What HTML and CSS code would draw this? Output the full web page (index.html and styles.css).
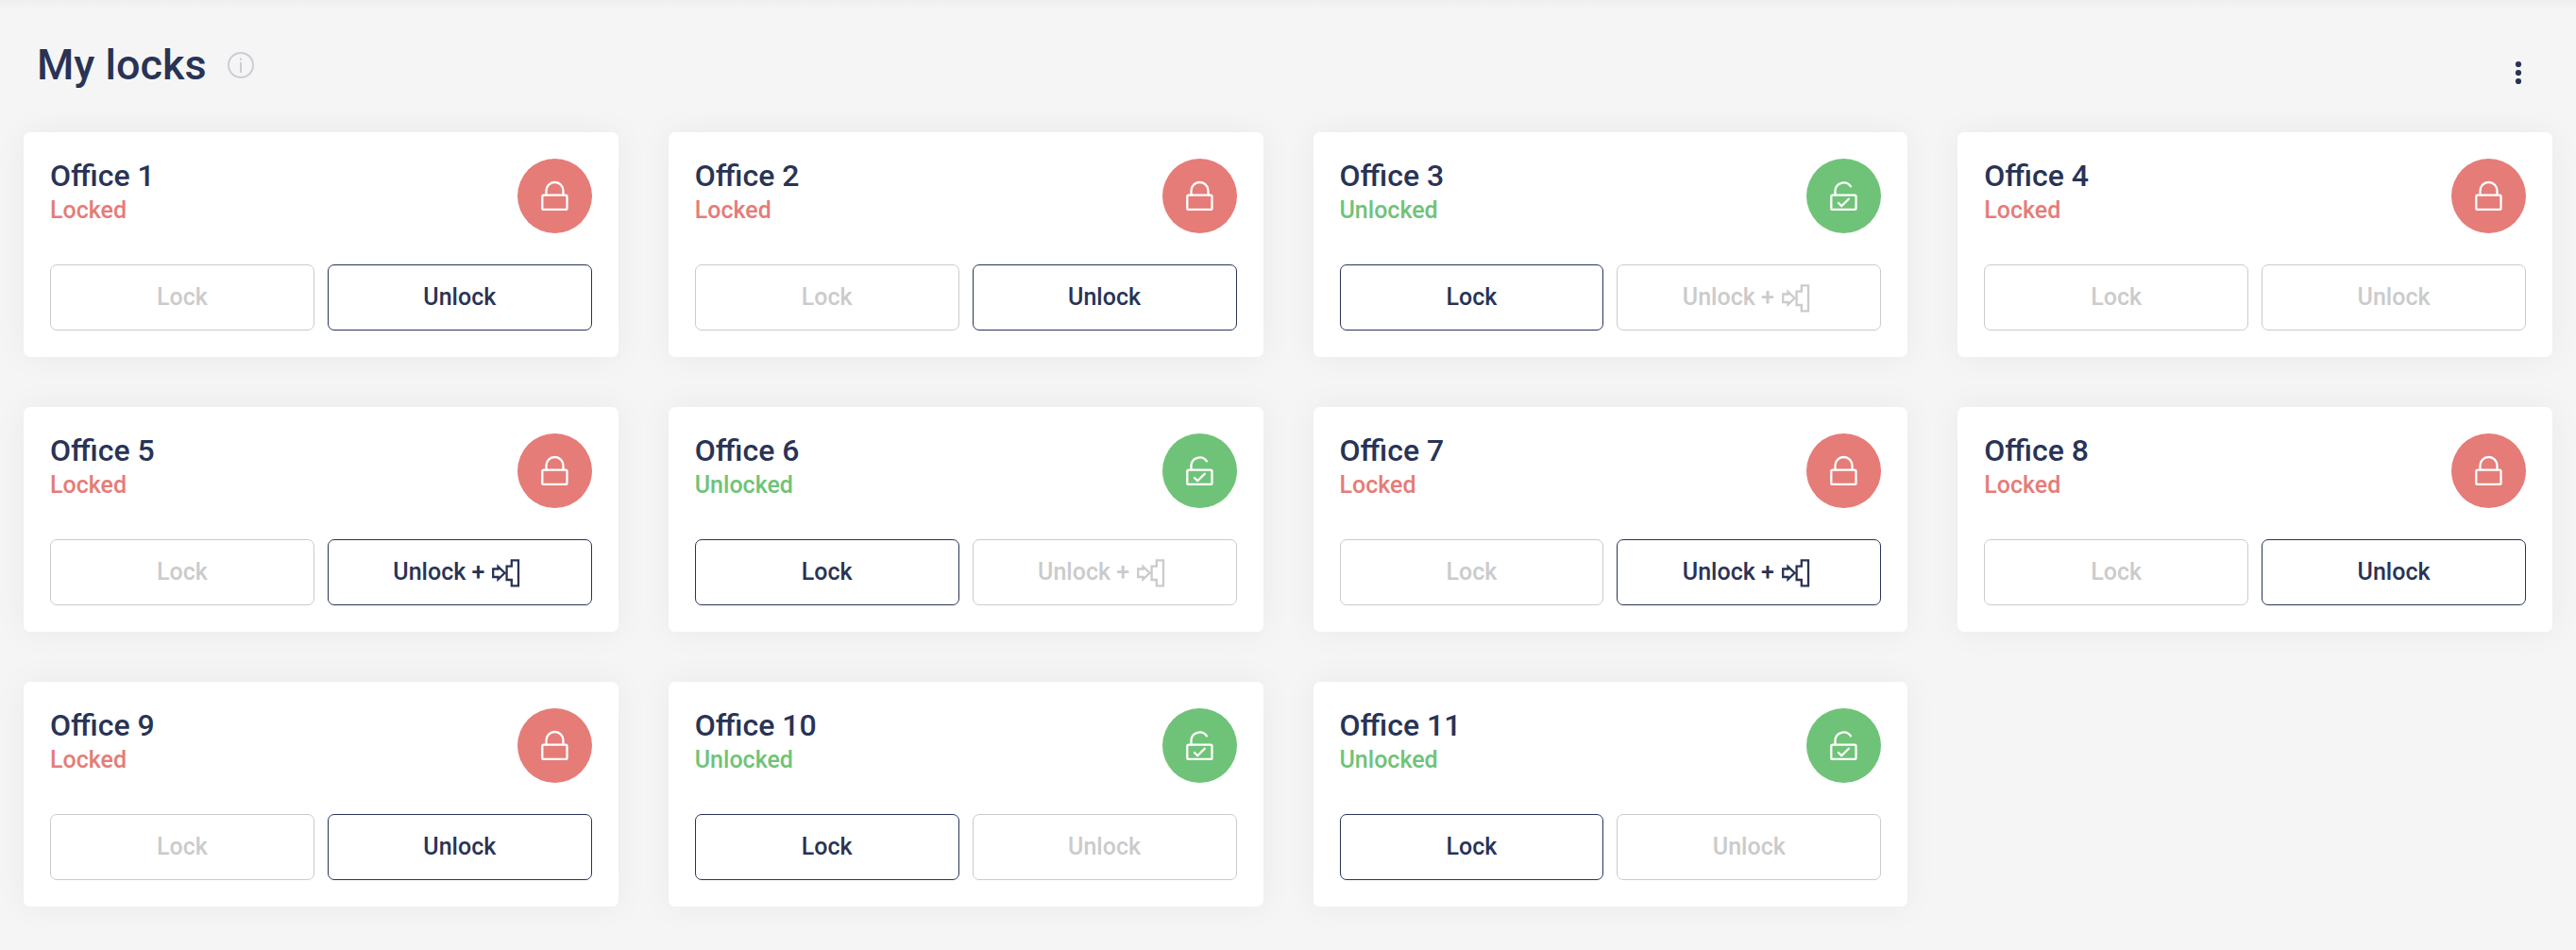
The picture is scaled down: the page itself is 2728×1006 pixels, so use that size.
FILE: index.html
```html
<!DOCTYPE html>
<html lang="en">
<head>
<meta charset="utf-8">
<meta name="viewport" content="width=device-width, initial-scale=1">
<title>My locks</title>
<link rel="stylesheet" href="styles.css">
</head>
<body>
<svg class="sprite" aria-hidden="true">
  <symbol id="locked" viewBox="0 0 33 33">
    <rect x="3.3" y="15.7" width="26.2" height="15.2" rx="1.5"/>
    <path d="M7.5 15.5V11a9 9 0 0 1 18 0v4.5"/>
  </symbol>
  <symbol id="unlocked" viewBox="0 0 33 33">
    <rect x="3.3" y="15.7" width="26.2" height="15.2" rx="1.5"/>
    <path d="M7.5 15.5V11a9 9 0 0 1 16.4-4.6M11 24l3.2 3.2 7.6-7.4"/>
  </symbol>
  <symbol id="door" viewBox="0 0 30 30">
    <path d="M1.2 10.5H6.5V8L13.5 14.8 6.5 21.5V19H1.2ZM20.8 1.3H28V28.3H20.8V22H15.6V7.7H20.8Z"/>
  </symbol>
</svg>
<header class="page-header">
  <h1 class="page-title">My locks</h1>
  <button class="icon-button info" type="button" aria-label="About locks">
    <svg class="info-icon" viewBox="0 0 28 28"><circle cx="14" cy="14" r="13"/><path d="M14 11v11M14 6.4v2.4"/></svg>
  </button>
  <button class="icon-button menu" type="button" aria-label="More options">
    <svg class="menu-icon" viewBox="0 0 8 26"><circle cx="4" cy="4" r="3.1"/><circle cx="4" cy="13" r="3.1"/><circle cx="4" cy="22" r="3.1"/></svg>
  </button>
</header>
<main class="locks">
  <article class="card locked">
    <div class="card-head"><div><h2 class="name">Office 1</h2><p class="status">Locked</p></div><span class="badge"><svg class="badge-icon"><use href="#locked"/></svg></span></div>
    <div class="actions"><button class="action" type="button" disabled>Lock</button><button class="action" type="button">Unlock</button></div>
  </article>
  <article class="card locked">
    <div class="card-head"><div><h2 class="name">Office 2</h2><p class="status">Locked</p></div><span class="badge"><svg class="badge-icon"><use href="#locked"/></svg></span></div>
    <div class="actions"><button class="action" type="button" disabled>Lock</button><button class="action" type="button">Unlock</button></div>
  </article>
  <article class="card unlocked">
    <div class="card-head"><div><h2 class="name">Office 3</h2><p class="status">Unlocked</p></div><span class="badge"><svg class="badge-icon"><use href="#unlocked"/></svg></span></div>
    <div class="actions"><button class="action" type="button">Lock</button><button class="action" type="button" disabled>Unlock +<svg class="door-icon"><use href="#door"/></svg></button></div>
  </article>
  <article class="card locked">
    <div class="card-head"><div><h2 class="name">Office 4</h2><p class="status">Locked</p></div><span class="badge"><svg class="badge-icon"><use href="#locked"/></svg></span></div>
    <div class="actions"><button class="action" type="button" disabled>Lock</button><button class="action" type="button" disabled>Unlock</button></div>
  </article>
  <article class="card locked">
    <div class="card-head"><div><h2 class="name">Office 5</h2><p class="status">Locked</p></div><span class="badge"><svg class="badge-icon"><use href="#locked"/></svg></span></div>
    <div class="actions"><button class="action" type="button" disabled>Lock</button><button class="action" type="button">Unlock +<svg class="door-icon"><use href="#door"/></svg></button></div>
  </article>
  <article class="card unlocked">
    <div class="card-head"><div><h2 class="name">Office 6</h2><p class="status">Unlocked</p></div><span class="badge"><svg class="badge-icon"><use href="#unlocked"/></svg></span></div>
    <div class="actions"><button class="action" type="button">Lock</button><button class="action" type="button" disabled>Unlock +<svg class="door-icon"><use href="#door"/></svg></button></div>
  </article>
  <article class="card locked">
    <div class="card-head"><div><h2 class="name">Office 7</h2><p class="status">Locked</p></div><span class="badge"><svg class="badge-icon"><use href="#locked"/></svg></span></div>
    <div class="actions"><button class="action" type="button" disabled>Lock</button><button class="action" type="button">Unlock +<svg class="door-icon"><use href="#door"/></svg></button></div>
  </article>
  <article class="card locked">
    <div class="card-head"><div><h2 class="name">Office 8</h2><p class="status">Locked</p></div><span class="badge"><svg class="badge-icon"><use href="#locked"/></svg></span></div>
    <div class="actions"><button class="action" type="button" disabled>Lock</button><button class="action" type="button">Unlock</button></div>
  </article>
  <article class="card locked">
    <div class="card-head"><div><h2 class="name">Office 9</h2><p class="status">Locked</p></div><span class="badge"><svg class="badge-icon"><use href="#locked"/></svg></span></div>
    <div class="actions"><button class="action" type="button" disabled>Lock</button><button class="action" type="button">Unlock</button></div>
  </article>
  <article class="card unlocked">
    <div class="card-head"><div><h2 class="name">Office 10</h2><p class="status">Unlocked</p></div><span class="badge"><svg class="badge-icon"><use href="#unlocked"/></svg></span></div>
    <div class="actions"><button class="action" type="button">Lock</button><button class="action" type="button" disabled>Unlock</button></div>
  </article>
  <article class="card unlocked">
    <div class="card-head"><div><h2 class="name">Office 11</h2><p class="status">Unlocked</p></div><span class="badge"><svg class="badge-icon"><use href="#unlocked"/></svg></span></div>
    <div class="actions"><button class="action" type="button">Lock</button><button class="action" type="button" disabled>Unlock</button></div>
  </article>
</main>
</body>
</html>
```
FILE: styles.css
```css
:root {
  --navy: #293356;
  --red: #e57c78;
  --green: #6fc378;
  --muted: #cbcbcb;
}

* {
  box-sizing: border-box;
}

body {
  margin: 0;
  min-height: 100vh;
  padding: 0 25px 44px;
  background: #f5f5f5 linear-gradient(#efefef, #f5f5f5) no-repeat top / 100% 10px;
  color: var(--navy);
  font-family: Roboto, "Liberation Sans", sans-serif;
  font-weight: 500;
}

.sprite {
  display: none;
}

.page-header {
  display: flex;
  align-items: center;
  padding: 39px 32px 41px 14px;
}

.page-title {
  margin: 0;
  font-size: 45px;
  font-weight: 500;
  line-height: 60px;
}

.icon-button {
  display: flex;
  padding: 0;
  border: 0;
  background: none;
  color: inherit;
  cursor: pointer;
}

.info {
  margin-left: 22px;
}

.info-icon {
  width: 28px;
  height: 28px;
  fill: none;
  stroke: #cccdd5;
  stroke-width: 2;
}

.menu {
  margin-left: auto;
  padding-top: 16px;
}

.menu-icon {
  width: 8px;
  height: 26px;
  fill: currentColor;
}

.locks {
  display: grid;
  grid-template-columns: repeat(auto-fill, minmax(500px, 1fr));
  gap: 53px;
}

.card {
  padding: 28px;
  border-radius: 7px;
  background: #fff;
  box-shadow: 0 0 35px rgba(0, 0, 0, 0.05);
}

.locked {
  --state: var(--red);
}

.unlocked {
  --state: var(--green);
}

.card-head {
  display: flex;
  justify-content: space-between;
  align-items: flex-start;
  margin-bottom: 33px;
}

.name {
  margin: 0;
  font-size: 32px;
  font-weight: 500;
  line-height: 36px;
}

.status {
  margin: 0;
  color: var(--state);
  font-size: 25px;
  line-height: 37px;
}

.badge {
  display: grid;
  place-items: center;
  width: 79px;
  height: 79px;
  border-radius: 50%;
  background: var(--state);
}

.badge-icon {
  width: 33px;
  height: 33px;
  fill: none;
  stroke: #fff;
  stroke-width: 2.3;
  stroke-linecap: round;
  stroke-linejoin: round;
}

.actions {
  display: grid;
  grid-template-columns: 1fr 1fr;
  gap: 14px;
}

.action {
  display: flex;
  justify-content: center;
  align-items: center;
  height: 70px;
  padding: 0 0 2px;
  border: 1px solid currentColor;
  border-radius: 7px;
  background: #fff;
  color: var(--navy);
  font: inherit;
  font-size: 25px;
  cursor: pointer;
}

.action:disabled {
  color: var(--muted);
  cursor: default;
}

.door-icon {
  width: 30px;
  height: 30px;
  margin: 4px 6px 0 8px;
  fill: none;
  stroke: currentColor;
  stroke-width: 2.3;
}
```
